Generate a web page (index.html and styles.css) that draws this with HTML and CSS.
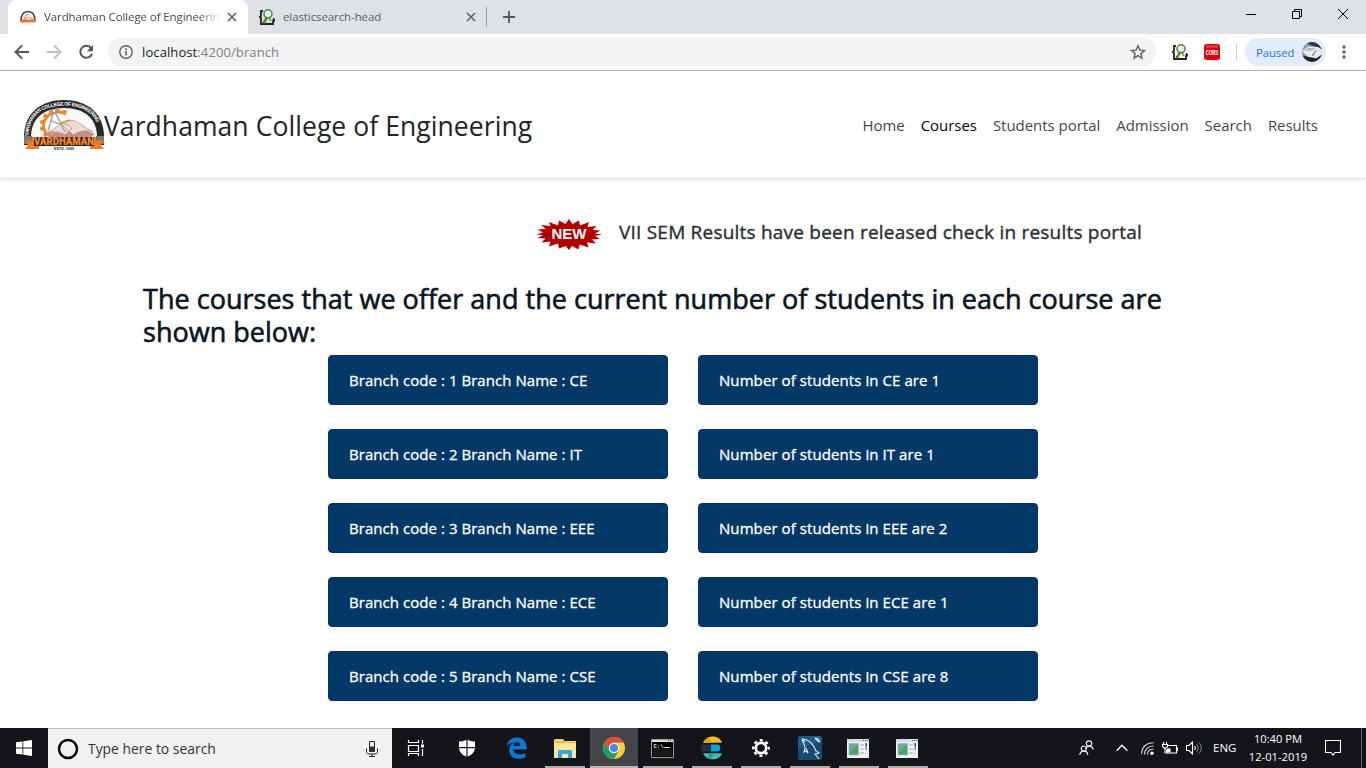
FILE: index.html
```html
<!DOCTYPE html>
<html lang="en">
<head>
<meta charset="utf-8">
<title>Vardhaman College of Engineering</title>
<link rel="stylesheet" href="styles.css">
</head>
<body>
<svg class="defs" width="0" height="0">
  <defs>
    <symbol id="head" viewBox="0 0 16 16">
      <path d="M4 2H2v5L0.8 8 2 9v6h12v-3l2-.5-2-2" fill="none" stroke="#222" stroke-width="1.8"/>
      <path d="M8.200 8.300 4.500 14" stroke="#4d8424" stroke-width="2.400"/>
      <path d="m9.500 8 2.500 4" stroke="#4d8424" stroke-width="1.400"/>
      <circle cx="9" cy="4.800" r="4" fill="#dff0f2" stroke="#568b2c" stroke-width="1.600"/>
    </symbol>
    <symbol id="close" viewBox="0 0 10 10"><path d="m1 1 8 8M9 1 1 9" stroke="#5f6368" stroke-width="1.600"/></symbol>
    <symbol id="win" viewBox="0 0 22 19">
      <path d="M0 0h22v19H0z" fill="#f3f3f3"/><path d="M0 0h22v3H0z" fill="#d8dadd"/><path d="M16 1h1v1h-1zM18 1h1v1h-1zM20 1h1v1h-1z" fill="#555"/>
      <path d="M2 4.500h9.500v11.500H2z" fill="#6ba9b0"/><path d="M3 15.500V13l8-7v9.500z" fill="#4da45e"/><path d="M2 4.500h9.500v11.500H2z" fill="none" stroke="#99a7aa" stroke-width=".6"/>
      <path d="M13 5h4v2h-4zM13 9h4v2h-4zM13 13h4v2h-4zM18 14h2v1h-2z" fill="#c9cccf"/><path d="M18.500 4H20v3.500h-1.500z" fill="#28479a"/><path d="M18.500 7.500H20V11h-1.500z" fill="#4da45e"/>
    </symbol>
  </defs>
</svg>
<div class="screen">
  <header class="tabs">
    <div class="tab active">
      <svg width="16" height="16" viewBox="0 0 16 16"><path d="M1 12C1 5 4 2.500 8 2.500S15 5 15 12" fill="#eee" stroke="#444" stroke-width="1.500"/><path d="M5 11V7.500L8 5" fill="none" stroke="#e5772c"/><path d="m5 10 4-2 4 2" stroke="#c99" fill="none"/><path d="M0 13.500 1.500 10.500h13l1.500 3z" fill="#e5772c"/></svg>
      <span class="tabtitle fade">Vardhaman College of Engineering</span>
      <svg class="x" width="10" height="10"><use href="#close"/></svg>
    </div>
    <div class="tab second">
      <svg width="16" height="16"><use href="#head"/></svg>
      <span class="tabtitle">elasticsearch-head</span>
      <svg class="x" width="10" height="10"><use href="#close"/></svg>
    </div>
    <i class="tabsep"></i>
    <svg class="plus" width="12" height="12" viewBox="0 0 12 12"><path d="M6 0v12M0 6h12" stroke="#54585c" stroke-width="1.800"/></svg>
    <div class="winctl">
      <svg width="10" height="10" viewBox="0 0 10 10"><path d="M0 5.500h10" stroke="#000"/></svg>
      <svg width="10" height="10" viewBox="0 0 10 10"><path d="M.5 2.500h7v7h-7zM2.500 2.500v-2h7v7h-2" fill="none" stroke="#000"/></svg>
      <svg width="10" height="10" viewBox="0 0 10 10"><path d="m0 0 10 10M10 0 0 10" stroke="#000"/></svg>
    </div>
  </header>
  <div class="toolbar">
    <svg class="nav" width="16" height="16" viewBox="0 0 16 16"><path d="M15 8H2M8 1.500 1.500 8 8 14.500" fill="none" stroke="#54585d" stroke-width="1.900"/></svg>
    <svg class="nav" width="16" height="16" viewBox="0 0 16 16"><path d="M1 8h13M8 1.500 14.500 8 8 14.500" fill="none" stroke="#bcbdbf" stroke-width="1.900"/></svg>
    <svg class="nav" width="16" height="16" viewBox="0 0 16 16"><path d="M13.200 4.200A6 6 0 1 0 14 9.800" fill="none" stroke="#54585d" stroke-width="2"/><path d="M15 1v6.200H8.800z" fill="#54585d"/></svg>
    <div class="omni">
      <svg width="14" height="14" viewBox="0 0 14 14"><circle cx="7" cy="7" r="6.200" fill="none" stroke="#5f6368" stroke-width="1.400"/><path d="M6.200 6h1.600v4.600H6.200zM6.200 3.300h1.600V5H6.200z" fill="#5f6368"/></svg>
      <span class="url"><b>localhost</b>:4200/branch</span>
      <svg class="star" width="16" height="16" viewBox="0 0 16 16"><path d="m8 1.800 1.800 4.300 4.700.4L10.900 9.600 12 14.200 8 11.700l-4 2.500 1.100-4.600L1.500 6.500l4.700-.4z" fill="none" stroke="#5f6368" stroke-width="1.400"/></svg>
    </div>
    <svg class="ext1" width="16" height="16"><use href="#head"/></svg>
    <svg class="ext2" width="16" height="16" viewBox="0 0 16 16"><rect width="16" height="16" rx="2.500" fill="#d5090d"/><path d="M2 1h12v3H2z" fill="#e3322f"/><text x="1.800" y="10.500" textLength="12.400" lengthAdjust="spacingAndGlyphs" class="cors">CORS</text></svg>
    <i class="toolsep"></i>
    <div class="paused"><span>Paused</span>
      <svg width="20" height="20" viewBox="0 0 20 20"><clipPath id="av"><circle cx="10" cy="10" r="10"/></clipPath><g clip-path="url(#av)"><path d="M0 0h20v20H0z" fill="#8b97a5"/><path d="M3 0h17v7L8 3z" fill="#30363c"/><path d="M0 9 6 4.500l10 .5 4 3v5l-5 3-9-1z" fill="#e8edf4"/><path d="m2 9 4-3 8 .5-4 2z" fill="#aab7c6"/><path d="M0 13.500l7 1.500 7 1.500 6-4V20H0z" fill="#20242a"/><path d="m10 13.500 3-4.500 3-.5-3 1.500-1.500 3.500z" fill="#2a5485"/></g></svg>
    </div>
    <svg class="dots" width="4" height="14" viewBox="0 0 4 14"><path d="M.5.5h3v3h-3zM.5 5.500h3v3h-3zM.5 10.500h3v3h-3z" fill="#5f6368"/></svg>
  </div>
  <main>
    <nav class="navbar">
      <svg class="logo" width="82" height="52" viewBox="0 0 82 52">
        <defs><path id="arc" d="M5.300 37C6.500 15 21 6.600 41 6.600S75.500 15 76.700 37"/></defs>
        <path d="M1 46V38C1 14 18 1 41 1s40 13 40 37v8z" fill="#292929"/>
        <path d="M8 46V38C8 20 20 9 41 9s33 11 33 29v8z" fill="#fbfaf9"/>
        <text class="arctext"><textPath href="#arc" textLength="92">VARDHAMAN COLLEGE OF ENGINEERING</textPath></text>
        <path d="M25 36c-6-5-6-14 0-19 5-5 13-5 18-2" fill="none" stroke="#ef842b" stroke-width="3"/>
        <path d="M23.500 37c-7-6-7-16 0-21.500 6-5 14-5 20-2" fill="none" stroke="#ef842b" stroke-width="3" stroke-dasharray="3.500 3.500"/>
        <path d="M23 35c6-6 14-6 19-1 4-4 10-6 16-4l14 5-4 3H25z" fill="#ca8f82"/>
        <path d="m26 34 11-9c6-1 9 1 12 5l-7 6c-5-3-10-4-16-2zM38 25c6-4 10-4 14-3l18 11c-8-2-13-1-20 3z" fill="#efdbd3" stroke="#b98378" stroke-width=".7"/>
        <path d="M31 11 25 32M31 11l11 22M28 22l11 4" fill="none" stroke="#8ba0ad" stroke-width="1.300"/><circle cx="31" cy="12" r="1.800" fill="#fff" stroke="#8ba0ad"/><path d="m38 24 9-3" stroke="#d79b20" stroke-width="1.500"/>
        <path d="M1 37h8v8H1zM73 37h8v8h-8z" fill="#777"/><path d="m2 41 7 1v-4h64v4l8-1-3 5 3 4H67v-4H16v4H2l3-4z" fill="#ee7c24"/><path d="M11 38h60v9H11z" fill="#3a241a"/>
        <text x="11" y="46.300" textLength="60" lengthAdjust="spacingAndGlyphs" class="ribbon">VARDHAMAN</text>
        <text x="31" y="51" textLength="20" lengthAdjust="spacingAndGlyphs" class="estd">ESTD. 1999</text>
      </svg>
      <span class="brand">Vardhaman College of Engineering</span>
      <ul class="links">
        <li>Home</li><li class="on">Courses</li><li>Students portal</li><li>Admission</li><li>Search</li><li>Results</li>
      </ul>
    </nav>
    <section class="notice">
      <svg width="66" height="31" viewBox="0 0 66 31"><path d="m33 0 3.500 5L43 1.500l1 5L53 3l-1.500 5 9-1-4 4 8 .5-5.500 3 7 1-7 1.500 5 3-8 .5 4 4-9-1 1.500 5-9-3-1 5-6.500-3.500L33 31l-3.500-4L23 29.500l-1-5-9 3 1.500-5-9 1 4-4-8-.5 5.500-3-7-.500 7-2-5.500-3 8-.5-4-4 9 1L13 3l9 3.500 1-5L29.500 5z" fill="#b20000"/><text x="15.500" y="20.300" textLength="35" lengthAdjust="spacingAndGlyphs" class="new">NEW</text></svg>
      <span class="msg">VII SEM Results have been released check in results portal</span>
    </section>
    <h2>The courses that we offer and the current number of students in each course are<br>shown below:</h2>
    <section class="grid">
      <div class="card">Branch code : 1 Branch Name : CE</div><div class="card r">Number of students in CE are 1</div>
      <div class="card">Branch code : 2 Branch Name : IT</div><div class="card r">Number of students in IT are 1</div>
      <div class="card">Branch code : 3 Branch Name : EEE</div><div class="card r">Number of students in EEE are 2</div>
      <div class="card">Branch code : 4 Branch Name : ECE</div><div class="card r">Number of students in ECE are 1</div>
      <div class="card">Branch code : 5 Branch Name : CSE</div><div class="card r">Number of students in CSE are 8</div>
    </section>
  </main>
  <footer class="taskbar">
    <div class="start"><svg width="16" height="16" viewBox="0 0 16 16"><path d="M0 2.300 6.500 1.400v6.200H0zM7.300 1.300 16 0v7.600H7.300zM0 8.400h6.500v6.200L0 13.700zM7.300 8.400H16V16l-8.700-1.300z" fill="#fff"/></svg></div>
    <div class="search">
      <svg width="22" height="22" viewBox="0 0 22 22"><circle cx="11" cy="11" r="9" fill="none" stroke="#000" stroke-width="2.500"/></svg>
      <span>Type here to search</span>
      <svg class="mic" width="12" height="16" viewBox="0 0 12 16"><path d="M3.500.5h5v10h-5zM.5 7.500v3c0 1.500 1 2.500 2.500 2.500h6c1.500 0 2.500-1 2.500-2.500v-3M6 13v2.500M3 15.500h6" fill="none" stroke="#222"/><path d="M3.500 5.500h5v5h-5z" fill="#333"/></svg>
    </div>
    <div class="apps">
      <div class="app tv"><svg width="18" height="16" viewBox="0 0 18 16"><path d="M1.500 0v2.500h10V0M1.500 16v-2.500h10V16M1.500 5.500h10v6h-10zM15.500 0v3.500M15.500 9v7" fill="none" stroke="#fff" stroke-width="1.200"/><path d="M14 4.500h3v3h-3z" fill="#fff"/></svg></div>
      <div class="app"><svg width="18" height="18" viewBox="0 0 18 18"><path d="M9 .5C6.500 2 4 2.500 1 2.500V8c0 5 3 8 8 9.700C14 16 17 13 17 8V2.500C14 2.500 11.500 2 9 .500z" fill="#fff"/><path d="M9 0v18M0 8.700h18" stroke="#15161c" stroke-width="1.200"/></svg></div>
      <div class="app"><svg width="21" height="22" viewBox="0 0 21 22"><path fill-rule="evenodd" d="M.5 9.500C1.500 4 5.300.5 10.800.5c6.500 0 9.700 4.600 9.700 9.500v2.500H7.300c.2 3.200 3 4.900 6.500 4.900 2.300 0 4-.6 5.500-1.500v4.300c-1.800 1-4 1.500-6.700 1.500-5.600 0-9.400-3-9.400-8.500 0-3.500 1.800-6.200 5-7.700C4 5.700 2 7 .5 9.500zM7.400 9h7c0-2.400-1.400-3.700-3.500-3.700S7.700 6.600 7.400 9z" fill="#0a78d7"/></svg></div>
      <div class="app run"><svg width="22" height="19" viewBox="0 0 22 19"><path d="M0 1.500C0 .7.700 0 1.500 0H9l1.500 2H22v17H0z" fill="#f8d775"/><path d="M1.500 2h9l1 1H22v1H0z" fill="#e9b949"/><path d="M0 4h22v15H0z" fill="#fde59a"/><path d="M4 19v-6.500c0-.8.700-1.500 1.500-1.500h11c.8 0 1.500.7 1.500 1.500V19h-4v-4H8v4z" fill="#35a7dc"/></svg></div>
      <div class="app run hot"><svg width="22" height="22" viewBox="0 0 22 22"><circle cx="11" cy="11" r="11" fill="#f9cd35"/><path d="M1.500 5.500A11 11 0 0 1 20.500 5.500H11L6.200 13.800z" fill="#dd4b3e"/><path d="M1.500 5.500A11 11 0 0 0 11 22l4.800-8.200H6.200z" fill="#1aa15f"/><circle cx="11" cy="11" r="5.200" fill="#fff"/><circle cx="11" cy="11" r="4.100" fill="#4688f1"/></svg></div>
      <div class="app run nudge"><svg width="23" height="19" viewBox="0 0 23 19"><path d="M.5.5h22v18H.5z" fill="#000" stroke="#9b9da0"/><path d="M1 1h21v2H1z" fill="#d8e3ec"/><path d="M17 1h1v1h-1zM19 1h1v1h-1z" fill="#444"/><text x="2.500" y="9" class="cmd" textLength="10" lengthAdjust="spacingAndGlyphs">C:\</text><path d="M13 8.500h6" stroke="#ddd"/><path d="M2 12c6-4 12-1 19-3v8H2z" fill="#181818"/></svg></div>
      <div class="app run"><svg width="22" height="24" viewBox="0 0 22 24"><path d="M2 6.700C4 2.500 7.500.5 12 .5c4.300 0 7.500 2.200 9 6.200z" fill="#f2bd1d"/><path d="M2 6.700 6 2l7 4.700z" fill="#d9a51c"/><path d="M.6 8.500H10v7H.6c-.5-2.500-.5-4.500 0-7z" fill="#2a3038"/><path d="M10 8.500h6c4.500 0 4.500 7 0 7h-6z" fill="#0aa5de"/><path d="M2 17.300h19c-1.500 4-4.700 6.200-9 6.200-4.500 0-8-2-10-6.200z" fill="#3ebeb0"/><path d="M8 17.300h5l-3 6c-2-1-3-3-2-6z" fill="#2b9d90"/></svg></div>
      <div class="app run"><svg width="18" height="18" viewBox="0 0 18 18"><circle cx="9" cy="9" r="5.200" fill="none" stroke="#fff" stroke-width="2.700"/><circle cx="9" cy="9" r="7.700" fill="none" stroke="#fff" stroke-width="2.400" stroke-dasharray="3 3.047" stroke-dashoffset="1.500"/></svg></div>
      <div class="app run"><svg width="24" height="24" viewBox="0 0 24 24"><rect width="24" height="24" rx="2" fill="#205c87"/><path d="M0 13 24 5v17q0 2-2 2H2q-2 0-2-2z" fill="#174a73"/><path d="M4 3c7 0 12 6 14 12l3 2-4 1 4 5M4 3c1 5 3 6 3 9l-1 4 2-1 2 2-2-5M4 3l3 3" fill="none" stroke="#dce8ef" stroke-width="1.100"/><path d="m17 2 5 4M20 2l-1 3" stroke="#dce8ef" stroke-width="1.700"/></svg></div>
      <div class="app run nudge"><svg width="22" height="19"><use href="#win"/></svg></div>
      <div class="app run nudge"><svg width="22" height="19"><use href="#win"/></svg></div>
    </div>
    <div class="tray">
      <svg width="15" height="16" viewBox="0 0 15 16"><g fill="none" stroke="#eee" stroke-width="1.200"><circle cx="10" cy="3.500" r="2.700"/><path d="M6.800 9c1-4 6.500-4 7.400.500"/><circle cx="4.800" cy="8.500" r="2.500"/><path d="M.8 15c.3-5 7.500-5.500 8 0"/></g></svg>
      <svg class="chev" width="12" height="8" viewBox="0 0 12 8"><path d="m.6 6.800 5.400-5.500 5.400 5.500" fill="none" stroke="#fff" stroke-width="1.300"/></svg>
      <svg class="wifi" width="13" height="13" viewBox="0 0 13 13"><g fill="none" stroke="#ddd" stroke-width="1.100"><path d="M.6 12C.6 5 5.500.7 12.500.7M3.500 12.500c0-5 3.500-8.500 9-8.500M6.500 12.500c0-3.500 2-5.500 6-5.500"/></g><circle cx="11" cy="11.300" r="1.700" fill="#fff"/></svg>
      <svg class="bat" width="16" height="13" viewBox="0 0 16 13"><path d="M5.500 3.500h9v7.500h-10V8M15.500 5.500v3.500M1.500 0v2.500M4.500 0v2.500M.5 2.500h5v2L4 6H2L.5 4.500zM3 6v5.500" fill="none" stroke="#fff" stroke-width="1.100"/><path d="M4.500 6.500h4v4h-4z" fill="#fff"/></svg>
      <svg class="vol" width="16" height="14" viewBox="0 0 16 14"><path d="M.5 4.500H3L6.500 1v12L3 9.500H.5zM8.500 5c1 1.200 1 2.800 0 4" fill="none" stroke="#fff" stroke-width="1.100"/><path d="M10.500 3c2 2.500 2 5.500 0 8M13 1.500c3 3.500 3 7.500 0 11" fill="none" stroke="#8a8b90"/></svg>
      <span class="eng">ENG</span>
      <div class="clock"><span>10:40 PM</span><span>12-01-2019</span></div>
      <svg class="act" width="16" height="16" viewBox="0 0 16 16"><path d="M.5.500h15v12H10l-2 2.500-2-2.500H.5z" fill="none" stroke="#fff" stroke-width="1.100"/></svg>
      <i class="desk"></i>
    </div>
  </footer>
</div>
</body>
</html>
```
FILE: styles.css
```css
* { box-sizing: border-box; }
body { margin: 0; font-family: "Open Sans", "Noto Sans", sans-serif; background: #fff; }
svg { flex: none; display: block; }
.defs { position: absolute; }
.screen { width: 1366px; height: 768px; display: flex; flex-direction: column; overflow: hidden; white-space: nowrap; }

.tabs { height: 34px; background: #dee1e6; display: flex; align-items: center; flex: none; }
.tab { display: flex; align-items: center; height: 34px; font-size: 11.5px; letter-spacing: -.1px; color: #45494d; }
.active { width: 240px; margin-left: 8px; padding-left: 12px; background: #fff; border-radius: 8px 8px 0 0; }
.second { width: 238px; padding-left: 11px; color: #5b5f63; }
.tabtitle { margin-left: 8px; margin-top: -2px; overflow: hidden; width: 175px; }
.fade { -webkit-mask-image: linear-gradient(90deg, #000 155px, transparent 177px); }
.x { margin-left: 8px; }
.tabsep { width: 1px; height: 20px; background: #9a9da1; }
.plus { margin-left: 16px; }
.winctl { margin-left: auto; display: flex; gap: 36px; padding: 0 18px 6px 0; }

.toolbar { height: 37px; border-bottom: 1px solid #b3b4b6; display: flex; align-items: center; flex: none; padding-left: 14px; }
.nav { margin-right: 16px; }
.omni { width: 1048px; height: 28px; margin-left: -2px; border-radius: 14px; background: #f1f3f4; display: flex; align-items: center; padding: 0 10px 0 11px; }
.url { font-size: 13px; letter-spacing: .1px; color: #7c8085; margin-left: 9px; }
.url b { font-weight: 400; color: #202124; }
.star { margin-left: auto; }
.ext1 { margin-left: 16px; }
.ext2 { margin-left: 16px; }
.cors { font: 700 7px Roboto, sans-serif; fill: #fff; }
.toolsep { width: 1px; height: 16px; background: #c8cbcf; margin-left: 16px; }
.paused { margin-left: 8px; width: 81px; height: 28px; border-radius: 14px; background: #e1ecfc; display: flex; align-items: center; justify-content: space-between; padding: 0 4px 0 11px; color: #1a73e8; font-size: 11.2px; }
.dots { margin-left: 16px; }

main { height: 657px; flex: none; }
.navbar { height: 108px; border-bottom: 1px solid #dfe0e5; box-shadow: 0 2px 4px rgba(0,0,0,.07); display: flex; align-items: center; padding: 0 48px 0 23px; }
.logo { margin-top: 1px; }
.arctext { font: 700 5px "Liberation Sans", sans-serif; fill: #fff; }
.ribbon { font: 900 10px Roboto, sans-serif; fill: #f08a35; }
.estd { font: 700 4px "Liberation Sans", sans-serif; fill: #222; }
.brand { font-size: 26.5px; letter-spacing: .07px; color: #212529; line-height: 40px; margin: 3px 0 0 -1px; }
.links { list-style: none; margin: 1px 0 0 auto; padding: 0; display: flex; gap: 16px; font-size: 14.95px; color: #43474b; }
.on { color: #050505; }
.notice { height: 31px; margin: 40px 0 0 536px; display: flex; align-items: center; gap: 17px; }
.new { font: 700 14px "Liberation Sans", sans-serif; fill: #fff; }
.msg { font-size: 19px; letter-spacing: .215px; color: #2b2f34; -webkit-text-stroke: .4px #2b2f34; margin-top: -6px; }
h2 { margin: 32px 0 0 143px; font-size: 27px; letter-spacing: .02px; line-height: 33px; font-weight: 400; color: #08141f; -webkit-text-stroke: .6px #08141f; }
.grid { margin: 7px 0 0 328px; display: grid; grid-template-columns: 340px 340px; gap: 24px 30px; }
.card { height: 50px; border-radius: 4px; background: #043866; border: 1px solid #033360; color: #fff; font-size: 15px; letter-spacing: .05px; -webkit-text-stroke: .3px #fff; padding: 0 20px; display: flex; align-items: center; }
.r { letter-spacing: .08px; }

.taskbar { height: 40px; background: #14151b; display: flex; flex: none; color: #fff; }
.start { width: 48px; display: flex; align-items: center; justify-content: center; }
.search { width: 344px; background: #f1f1f1; border-top: 1px solid #bbb; color: #333; font-size: 13.9px; display: flex; align-items: center; padding: 0 14px 0 9px; gap: 9px; }
.mic { margin-left: auto; }
.apps { display: flex; gap: 1px; }
.app { width: 48px; height: 40px; display: flex; align-items: center; justify-content: center; }
.tv { width: 50px; padding-right: 2px; }
.nudge { padding-right: 2px; }
.run { background: linear-gradient(#b5aca6, #b5aca6) 50% 100% / 40px 2px no-repeat; }
.hot { background: linear-gradient(#bdb6b1, #bdb6b1) 50% 100% / 48px 2px no-repeat #44454a; }
.cmd { font: 700 6px "Liberation Mono", monospace; fill: #fff; }
.tray { margin-left: auto; display: flex; align-items: center; }
.chev { margin-left: 22px; }
.wifi { margin-left: 13px; }
.bat { margin-left: 8px; }
.vol { margin-left: 8px; }
.eng { font-size: 11.5px; width: 23px; margin: -1px 0 0 11px; }
.clock { width: 60px; margin-left: 12px; display: flex; flex-direction: column; align-items: center; font-size: 11.2px; line-height: 18px; }
.act { margin-left: 17px; }
.desk { width: 1px; height: 40px; background: #66676c; margin: 0 4px 0 20px; }
```
